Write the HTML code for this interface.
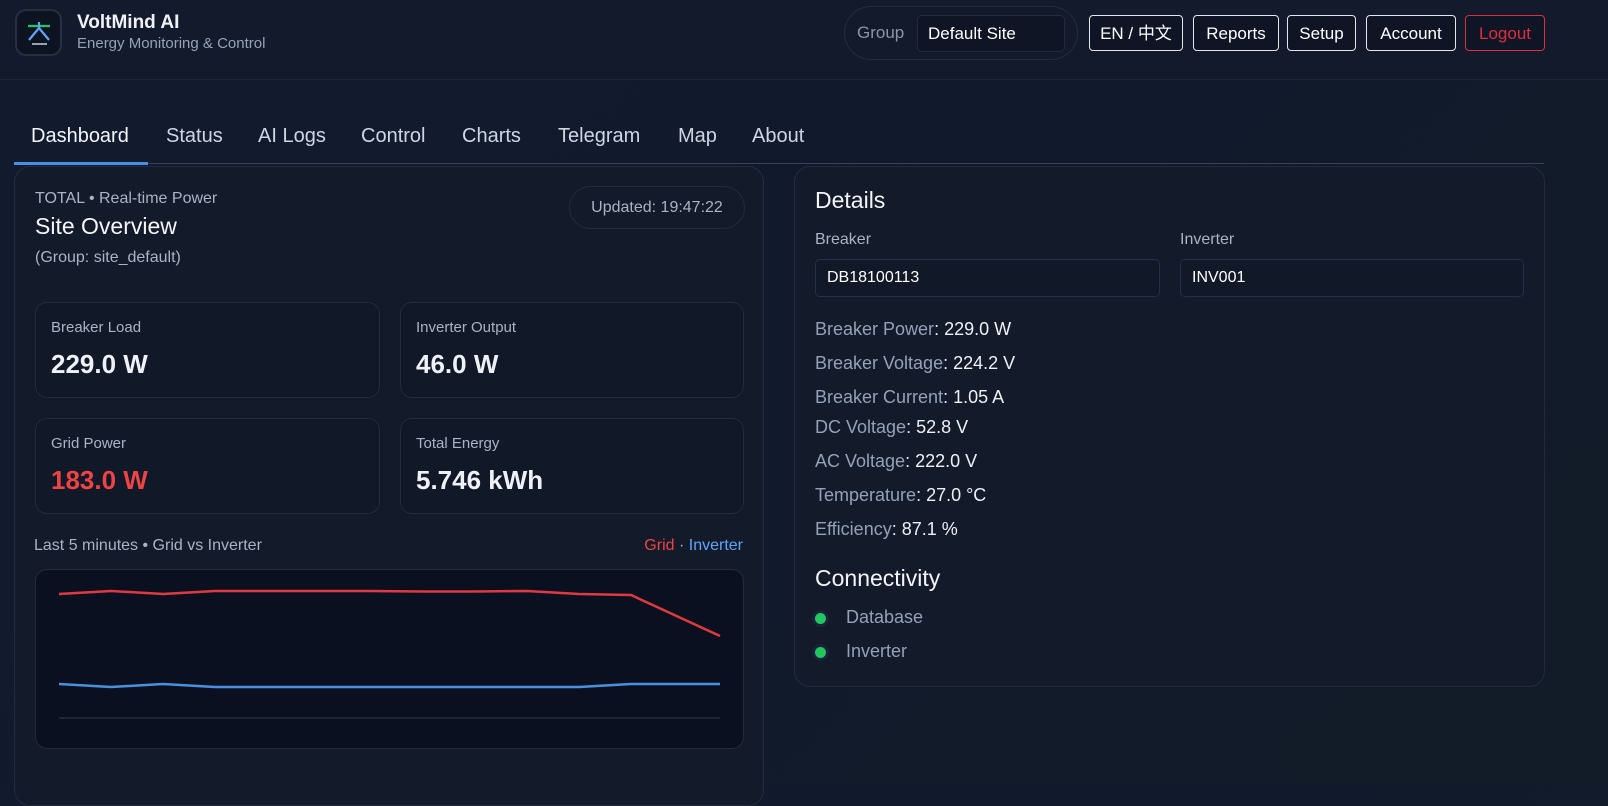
<!DOCTYPE html>
<html><head><meta charset="utf-8"><style>
*{box-sizing:border-box;margin:0;padding:0}
body{width:1608px;height:783px;overflow:hidden;background:linear-gradient(135deg,#121a2e 0%,#111a2c 50%,#121c28 100%);font-family:"Liberation Sans","Noto Sans CJK SC",sans-serif;color:#e5e9f0;position:relative}
.abs{position:absolute}
header{position:absolute;left:0;top:0;width:1608px;height:80px;background:#131a2b;border-bottom:1px solid #1e2638}
.logo{left:15px;top:9px;width:47px;height:47px;border:2px solid #263044;border-radius:11px;background:#0d1320}
.btn{position:absolute;top:15px;height:36px;border:1px solid #e5e7eb;border-radius:4px;color:#fff;font-size:17px;display:flex;align-items:center;justify-content:center;background:#0f1524;line-height:1}
.tabs span{position:absolute;top:125px;font-size:20px;color:#cfd6e2}
.card{position:absolute;background:#131a29;border:1px solid #222c3e;border-radius:16px}
.m{position:absolute;border:1px solid #222c3e;border-radius:12px;background:#111827}
.m .l{position:absolute;left:15px;top:16px;font-size:15px;color:#a9b4c6}
.m .v{position:absolute;left:15px;top:46px;font-size:26px;font-weight:bold;color:#eef1f6}
.row{position:absolute;left:20px;font-size:18px;color:#93a2b8}
.row b{font-weight:normal;color:#eef1f6}
.inp{position:absolute;top:92px;height:38px;border:1px solid #243047;border-radius:5px;background:#111827;font-size:16px;color:#fff;padding:9px 11px}
.dot{position:absolute;left:20px;width:11px;height:11px;border-radius:50%;background:#22c55e;box-shadow:0 0 0 3px #18233a}
</style></head><body>
<header>
<div class="abs logo"><svg width="43" height="43" viewBox="0 0 43 43"><line x1="11" y1="15" x2="33" y2="15" stroke="#22c55e" stroke-width="2.2"/><path d="M22 11 V17 L12 29 M22 17 L32 29" stroke="#60a5fa" stroke-width="2.2" fill="none"/><line x1="15" y1="33" x2="30" y2="33" stroke="#94a3b8" stroke-width="2"/></svg></div>
<div class="abs" style="left:77px;top:12px;font-size:19px;font-weight:bold;color:#eef1f6">VoltMind AI</div>
<div class="abs" style="left:77px;top:35px;font-size:15px;color:#94a3b8">Energy Monitoring &amp; Control</div>
<div class="abs" style="left:844px;top:6px;width:234px;height:54px;border:1px solid #222c3e;border-radius:27px"></div>
<div class="abs" style="left:857px;top:23px;font-size:17px;color:#8a96a8">Group</div>
<div class="abs" style="left:917px;top:15px;width:148px;height:37px;border:1px solid #222c3e;border-radius:5px;background:#0f1524;font-size:17px;color:#fff;padding:8px 10px">Default Site</div>
<div class="btn" style="left:1089px;width:94px">EN / 中文</div>
<div class="btn" style="left:1193px;width:86px">Reports</div>
<div class="btn" style="left:1287px;width:69px">Setup</div>
<div class="btn" style="left:1366px;width:90px">Account</div>
<div class="btn" style="left:1465px;width:80px;border-color:#dc2f3f;color:#dc2f3f">Logout</div>
</header>
<div class="tabs">
<span style="left:31px;color:#f3f5f9">Dashboard</span><span style="left:166px">Status</span><span style="left:258px">AI Logs</span><span style="left:361px">Control</span><span style="left:462px">Charts</span><span style="left:558px">Telegram</span><span style="left:678px">Map</span><span style="left:752px">About</span>
</div>
<div class="abs" style="left:14px;top:163px;width:1530px;height:1px;background:#3a4355"></div>
<div class="abs" style="left:14px;top:162px;width:134px;height:3px;background:#4a90e2"></div>

<div class="card" style="left:14px;top:166px;width:750px;height:640px">
<div class="abs" style="left:20px;top:23px;font-size:16px;color:#a9b4c6">TOTAL • Real-time Power</div>
<div class="abs" style="left:20px;top:46px;font-size:23px;color:#f3f5f9">Site Overview</div>
<div class="abs" style="left:20px;top:82px;font-size:16px;color:#a9b4c6">(Group: site_default)</div>
<div class="abs" style="left:554px;top:19px;width:176px;height:43px;border:1px solid #222c3e;border-radius:22px;font-size:16px;color:#a9b4c6;text-align:center;line-height:41px">Updated: 19:47:22</div>
<div class="m" style="left:20px;top:135px;width:345px;height:96px"><div class="l">Breaker Load</div><div class="v">229.0 W</div></div>
<div class="m" style="left:385px;top:135px;width:344px;height:96px"><div class="l">Inverter Output</div><div class="v">46.0 W</div></div>
<div class="m" style="left:20px;top:251px;width:345px;height:96px"><div class="l">Grid Power</div><div class="v" style="color:#ef4444">183.0 W</div></div>
<div class="m" style="left:385px;top:251px;width:344px;height:96px"><div class="l">Total Energy</div><div class="v">5.746 kWh</div></div>
<div class="abs" style="left:19px;top:370px;font-size:16px;color:#a9b4c6">Last 5 minutes • Grid vs Inverter</div>
<div class="abs" style="right:20px;top:370px;font-size:16px;color:#a9b4c6"><span style="color:#ef4444">Grid</span> · <span style="color:#60a5fa">Inverter</span></div>
<div class="abs" style="left:20px;top:402px;width:709px;height:180px;border:1px solid #222c3e;border-radius:12px;background:#0b1020;overflow:hidden">
<svg width="709" height="180" style="position:absolute;left:0;top:0"><line x1="23" y1="148" x2="684" y2="148" stroke="#1f2737" stroke-width="2"/>
<polyline fill="none" stroke="#e0393f" stroke-width="2.5" points="23,24 75,21 127,24 179,21 231,21 283,21 335,21 387,21.5 439,21.5 491,21 543,24 595,25 684,66"/>
<polyline fill="none" stroke="#4a8fe0" stroke-width="2.5" points="23,114 75,117 127,114 179,117 231,117 283,117 335,117 387,117 439,117 491,117 543,117 595,114 684,114"/></svg>
</div>
</div>

<div class="card" style="left:794px;top:166px;width:751px;height:521px">
<div class="abs" style="left:20px;top:20px;font-size:23px;color:#f3f5f9">Details</div>
<div class="abs" style="left:20px;top:64px;font-size:16px;color:#a9b4c6">Breaker</div>
<div class="abs" style="left:385px;top:64px;font-size:16px;color:#a9b4c6">Inverter</div>
<div class="inp" style="left:20px;width:345px">DB18100113</div>
<div class="inp" style="left:385px;width:344px">INV001</div>
<div class="row" style="top:152px">Breaker Power<b>: 229.0 W</b></div>
<div class="row" style="top:186px">Breaker Voltage<b>: 224.2 V</b></div>
<div class="row" style="top:220px">Breaker Current<b>: 1.05 A</b></div>
<div class="row" style="top:250px">DC Voltage<b>: 52.8 V</b></div>
<div class="row" style="top:284px">AC Voltage<b>: 222.0 V</b></div>
<div class="row" style="top:318px">Temperature<b>: 27.0 °C</b></div>
<div class="row" style="top:352px">Efficiency<b>: 87.1 %</b></div>
<div class="abs" style="left:20px;top:398px;font-size:23px;color:#f3f5f9">Connectivity</div>
<div class="dot" style="top:446px"></div><div class="row" style="left:51px;top:440px">Database</div>
<div class="dot" style="top:480px"></div><div class="row" style="left:51px;top:474px">Inverter</div>
</div>
</body></html>
